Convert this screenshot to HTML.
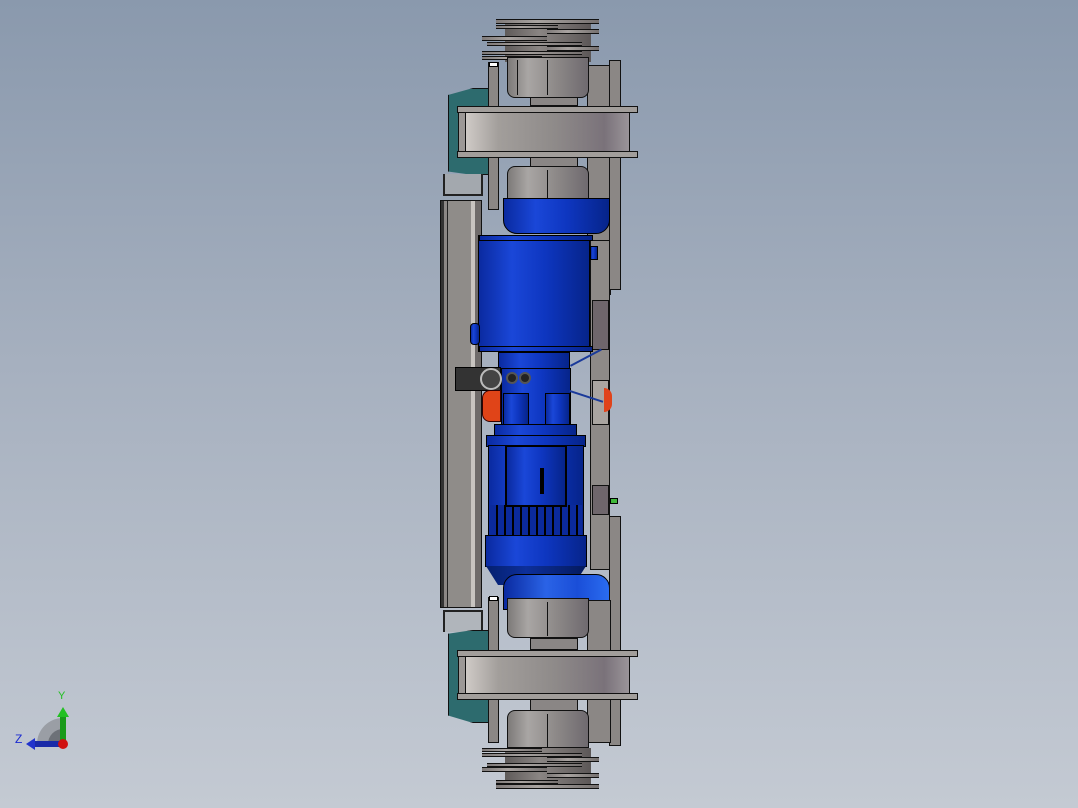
<!DOCTYPE html>
<html><head><meta charset="utf-8"><style>
html,body{margin:0;padding:0}
body{width:1078px;height:808px;position:relative;overflow:hidden;
background:linear-gradient(180deg,#8a99ad 0%,#a6b0bf 45%,#c4cad3 100%);
font-family:"Liberation Sans",sans-serif}
div{position:absolute;box-sizing:border-box}
.g{background:#8b8785;border:1px solid #111}
.gl{background:#a29e9b;border:1px solid #111}
.rol{background:linear-gradient(90deg,#7d7a79 0%,#a9a6a4 25%,#8d8988 60%,#6f6a6f 100%);border:1px solid #111}
.wh{background:linear-gradient(90deg,#cfcac6 0%,#a29e9b 20%,#8e8a89 55%,#7a727a 85%,#9a9499 100%);border:1px solid #111}
.disc{background:linear-gradient(90deg,#7f7a79,#a8a3a0 40%,#75706f);border-top:1px solid #111;border-bottom:1px solid #111}
.bl{background:linear-gradient(90deg,#0a2aa0 0%,#1a47d8 30%,#0e36c0 60%,#06248a 100%);border:1px solid #000}
.tl{background:#2d6b6e;border:1px solid #111}
</style></head><body>

<!-- TOP pulleys -->
<div style="left:505px;top:22px;width:86px;height:40px;background:linear-gradient(90deg,#5f5b5a,#8a8583 40%,#5c5757);"></div>
<div class="disc" style="left:496px;top:19px;width:103px;height:5px"></div>
<div class="disc" style="left:496px;top:25px;width:62px;height:4px"></div>
<div class="disc" style="left:547px;top:29px;width:52px;height:5px"></div>
<div class="disc" style="left:482px;top:36px;width:65px;height:5px"></div>
<div class="disc" style="left:487px;top:42px;width:95px;height:4px"></div>
<div class="disc" style="left:547px;top:46px;width:52px;height:5px"></div>
<div class="disc" style="left:482px;top:51px;width:100px;height:4px"></div>
<div class="disc" style="left:482px;top:56px;width:60px;height:4px"></div>

<!-- right back panels -->
<div class="g" style="left:587px;top:65px;width:24px;height:230px"></div>
<div class="g" style="left:609px;top:60px;width:12px;height:230px"></div>
<div class="g" style="left:590px;top:240px;width:20px;height:330px;background:#8e8a88"></div>
<div class="g" style="left:592px;top:300px;width:17px;height:50px;background:#6f666c"></div>
<div class="g" style="left:592px;top:380px;width:17px;height:45px;background:#aaa5a1"></div>
<div class="g" style="left:592px;top:485px;width:17px;height:30px;background:#6f666c"></div>
<div style="left:604px;top:388px;width:8px;height:24px;background:#e0431a;border-radius:0 8px 8px 0"></div>
<div style="left:610px;top:498px;width:8px;height:6px;background:#3fb83a;border:1px solid #000"></div>

<!-- Teal top -->
<div class="tl" style="left:448px;top:88px;width:42px;height:87px;clip-path:polygon(0 8%,60% 0,100% 0,100% 100%,60% 100%,0 96%)"></div>
<div class="gl" style="left:458px;top:112px;width:32px;height:40px;background:#9c9896"></div>
<div class="g" style="left:488px;top:62px;width:11px;height:148px"></div>
<div style="left:489px;top:62px;width:9px;height:5px;background:#fff;border:1px solid #000"></div>

<!-- rollers top -->
<div style="left:530px;top:96px;width:48px;height:10px;background:#8a8685;border:1px solid #111"></div>
<div class="rol" style="left:507px;top:57px;width:82px;height:41px;border-radius:0 0 8px 8px"></div>
<div style="left:517px;top:60px;width:1px;height:35px;background:#111"></div>
<div style="left:547px;top:60px;width:1px;height:35px;background:#111"></div>
<div class="wh" style="left:465px;top:112px;width:165px;height:40px"></div>
<div class="gl" style="left:457px;top:106px;width:181px;height:7px"></div>
<div class="gl" style="left:457px;top:151px;width:181px;height:7px"></div>
<div style="left:530px;top:157px;width:48px;height:10px;background:#8a8685;border:1px solid #111"></div>
<div class="rol" style="left:507px;top:166px;width:82px;height:38px;border-radius:8px 8px 0 0"></div>
<div style="left:547px;top:170px;width:1px;height:33px;background:#111"></div>

<div style="left:443px;top:174px;width:40px;height:22px;border:2px solid #222;border-top:none;background:#a3a8ae"></div>
<div class="g" style="left:440px;top:200px;width:42px;height:408px;background:linear-gradient(90deg,#333 0,#333 3px,#8b8785 3px,#8b8785 6px,#222 6px,#222 7px,#8f8c89 7px,#8f8c89 30px,#c8c4c0 30px,#c8c4c0 34px,#6f6b6a 34px)"></div>

<div class="bl" style="left:503px;top:198px;width:107px;height:36px;border-radius:0 0 14px 14px"></div>
<div class="bl" style="left:478px;top:235px;width:112px;height:117px"></div>
<div class="bl" style="left:479px;top:235px;width:114px;height:6px"></div>
<div class="bl" style="left:479px;top:346px;width:114px;height:6px"></div>
<div class="bl" style="left:470px;top:323px;width:10px;height:22px;border-radius:4px"></div>
<div class="bl" style="left:590px;top:246px;width:8px;height:14px"></div>

<div class="bl" style="left:498px;top:352px;width:72px;height:18px"></div>
<div class="bl" style="left:501px;top:368px;width:70px;height:57px"></div>
<div class="bl" style="left:503px;top:393px;width:26px;height:32px"></div>
<div class="bl" style="left:545px;top:393px;width:25px;height:32px"></div>
<div style="left:455px;top:367px;width:46px;height:24px;background:#333;border:1px solid #000"></div>
<div style="left:480px;top:368px;width:22px;height:22px;background:#444;border:2px solid #bbb;border-radius:50%"></div>
<div style="left:506px;top:372px;width:12px;height:12px;background:#222;border:2px solid #555;border-radius:50%"></div>
<div style="left:519px;top:372px;width:12px;height:12px;background:#222;border:2px solid #555;border-radius:50%"></div>
<div style="left:482px;top:390px;width:19px;height:32px;background:#e04418;border:1px solid #300;border-radius:8px 0 0 8px"></div>
<div style="left:570px;top:365px;width:35px;height:2px;background:#1a3a9a;transform:rotate(-28deg);transform-origin:0 0"></div>
<div style="left:570px;top:390px;width:35px;height:2px;background:#1a3a9a;transform:rotate(18deg);transform-origin:0 0"></div>

<div class="bl" style="left:494px;top:424px;width:83px;height:12px"></div>
<div class="bl" style="left:486px;top:435px;width:100px;height:12px"></div>
<div class="bl" style="left:488px;top:445px;width:96px;height:92px"></div>
<div style="left:490px;top:505px;width:92px;height:31px;background:repeating-linear-gradient(90deg,#0b2a9c 0,#0b2a9c 6px,#000 6px,#000 8px)"></div>
<div class="bl" style="left:505px;top:445px;width:62px;height:62px;border:2px solid #000"></div>
<div style="left:540px;top:468px;width:4px;height:26px;background:#000"></div>
<div class="bl" style="left:485px;top:535px;width:102px;height:32px"></div>
<div style="left:486px;top:566px;width:100px;height:19px;background:linear-gradient(90deg,#041f6e,#0d2f9a 40%,#041a5e);clip-path:polygon(0 0,100% 0,88% 100%,12% 100%)"></div>

<div class="bl" style="left:503px;top:574px;width:107px;height:36px;border-radius:14px 14px 0 0;background:linear-gradient(90deg,#0a2aa0,#2a63e6 40%,#1a4ed8 70%,#2a6cf0)"></div>

<div class="g" style="left:609px;top:516px;width:12px;height:230px"></div>
<div class="g" style="left:587px;top:600px;width:24px;height:143px"></div>

<div style="left:443px;top:610px;width:40px;height:22px;border:2px solid #222;border-bottom:none;background:#b0b5bb"></div>
<div class="tl" style="left:448px;top:630px;width:42px;height:93px;clip-path:polygon(0 4%,60% 0,100% 0,100% 100%,60% 100%,0 92%)"></div>
<div class="gl" style="left:458px;top:656px;width:32px;height:38px;background:#9c9896"></div>
<div class="g" style="left:488px;top:597px;width:11px;height:146px"></div>
<div style="left:489px;top:596px;width:9px;height:5px;background:#fff;border:1px solid #000"></div>

<div class="rol" style="left:507px;top:598px;width:82px;height:40px;border-radius:0 0 8px 8px"></div>
<div style="left:547px;top:602px;width:1px;height:34px;background:#111"></div>
<div style="left:530px;top:638px;width:48px;height:12px;background:#8a8685;border:1px solid #111"></div>
<div class="wh" style="left:465px;top:656px;width:165px;height:38px"></div>
<div class="gl" style="left:457px;top:650px;width:181px;height:7px"></div>
<div class="gl" style="left:457px;top:693px;width:181px;height:7px"></div>
<div style="left:530px;top:699px;width:48px;height:12px;background:#8a8685;border:1px solid #111"></div>
<div class="rol" style="left:507px;top:710px;width:82px;height:38px;border-radius:8px 8px 0 0"></div>
<div style="left:547px;top:714px;width:1px;height:33px;background:#111"></div>

<div style="left:505px;top:748px;width:86px;height:40px;background:linear-gradient(90deg,#5f5b5a,#8a8583 40%,#5c5757);"></div>
<div class="disc" style="left:482px;top:748px;width:60px;height:4px"></div>
<div class="disc" style="left:482px;top:753px;width:100px;height:4px"></div>
<div class="disc" style="left:547px;top:757px;width:52px;height:5px"></div>
<div class="disc" style="left:487px;top:763px;width:95px;height:4px"></div>
<div class="disc" style="left:482px;top:767px;width:65px;height:5px"></div>
<div class="disc" style="left:547px;top:773px;width:52px;height:5px"></div>
<div class="disc" style="left:496px;top:780px;width:62px;height:4px"></div>
<div class="disc" style="left:496px;top:784px;width:103px;height:5px"></div>

<svg style="position:absolute;left:0;top:680px" width="90" height="80" viewBox="0 0 90 80">
<path d="M63 64 L37 64 A26 26 0 0 1 63 38 Z" fill="#9a9ea5"/>
<path d="M63 64 L48 64 A15 15 0 0 1 63 49 Z" fill="#6d7178"/>
<rect x="60" y="36" width="6" height="28" fill="#1a9a1a"/>
<polygon points="57,37 69,37 63,27" fill="#22c022"/>
<rect x="34" y="61" width="28" height="6" fill="#1a2aa8"/>
<polygon points="35,58 35,70 26,64" fill="#2233cc"/>
<circle cx="63" cy="64" r="5" fill="#d01010"/>
<text x="58" y="19" font-size="11" fill="#20c020" font-family="Liberation Sans">Y</text>
<text x="15" y="63" font-size="12" fill="#1a2ad0" font-family="Liberation Sans">Z</text>
</svg>
</body></html>
